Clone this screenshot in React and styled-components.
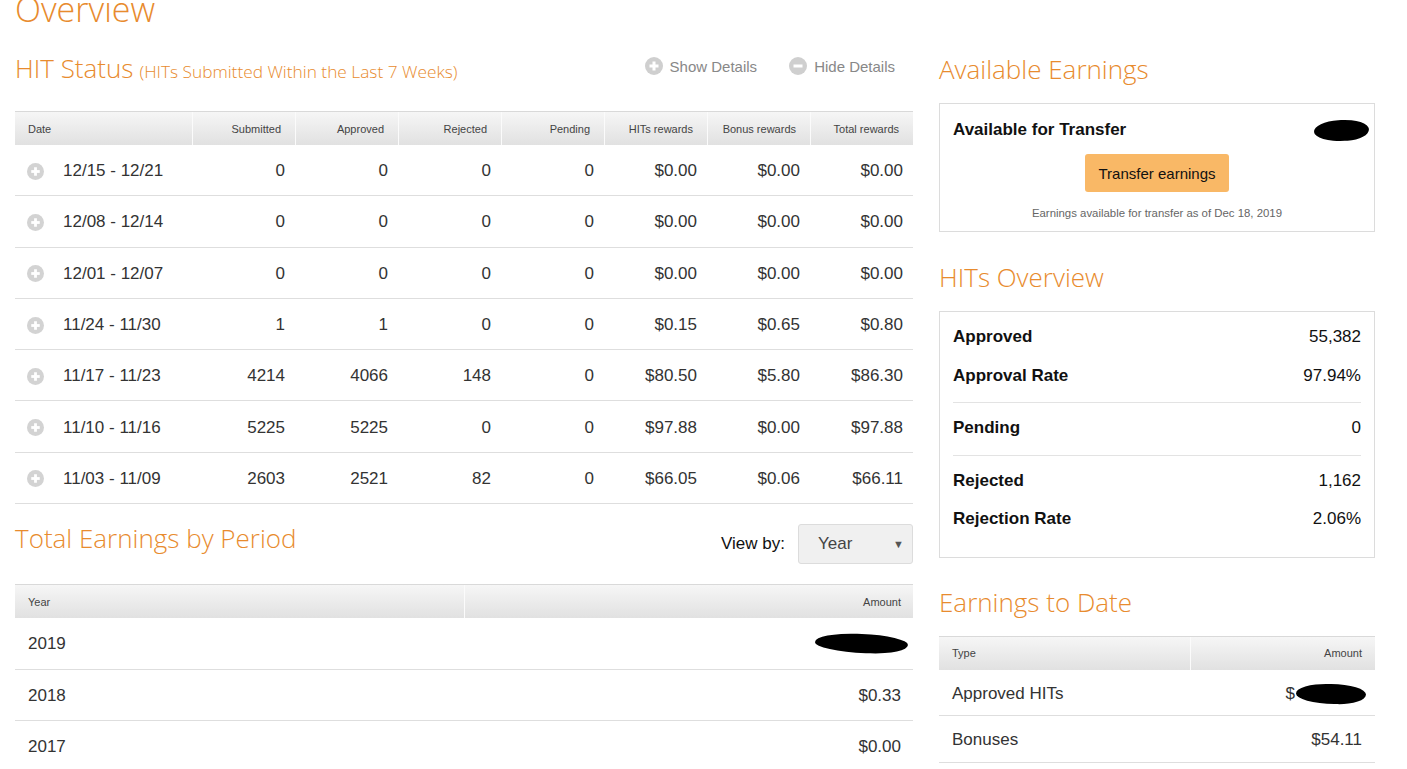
import React from 'react';
import styled, {createGlobalStyle} from 'styled-components';

const GlobalStyle = createGlobalStyle`
    html, body {
        margin: 0;
        padding: 0;
        background: #fff;
        overflow: hidden;
    }
    body {
        font-family: "Liberation Sans", Arial, sans-serif;
        color: #333;
    }
`;

const ORANGE = '#e88b2e';

const Page = styled.div`
    padding: 0 15px;
`;

const PageTitle = styled.h1`
    margin: -11px 0 0;
    font-family: "Open Sans", sans-serif;
    font-weight: 300;
    font-size: 34px;
    line-height: 40px;
    color: ${ORANGE};
`;

const Columns = styled.div`
    display: grid;
    grid-template-columns: 898px 436px;
    column-gap: 26px;
    margin-top: 21px;
`;

const Column = styled.div`
    display: flex;
    flex-direction: column;
`;

const SectionHead = styled.div`
    display: flex;
    align-items: center;
    justify-content: space-between;
    height: 40px;
    margin-top: ${p => p.$top || 0}px;
`;

const Heading = styled.h2`
    margin: 0 0 ${p => p.$lift || 0}px;
    font-family: "Open Sans", sans-serif;
    font-weight: 300;
    font-size: 26px;
    line-height: 40px;
    color: ${ORANGE};
    white-space: nowrap;
`;

const HeadingNote = styled.span`
    font-size: 17.3px;
    margin-left: 6px;
`;

const DetailLinks = styled.div`
    display: flex;
    gap: 32px;
    padding-right: 18px;
    margin-top: -8px;
`;

const DetailLink = styled.a`
    display: flex;
    align-items: center;
    gap: 7px;
    font-size: 15px;
    color: #888;
    text-decoration: none;
    cursor: pointer;
`;

const CircleIcon = ({size = 18, minus = false, color = '#cfcfcf', stroke = 3}) => (
    <svg width={size} height={size} viewBox="0 0 18 18">
        <circle cx="9" cy="9" r="9" fill={color}/>
        <line x1="4.5" y1="9" x2="13.5" y2="9" stroke="#fff" strokeWidth={stroke}/>
        {!minus && <line x1="9" y1="4.5" x2="9" y2="13.5" stroke="#fff" strokeWidth={stroke}/>}
    </svg>
);

/* tables */

const Table = styled.div`
    display: flex;
    flex-direction: column;
    margin-top: ${p => p.$top || 0}px;
`;

const HeadRow = styled.div`
    display: grid;
    grid-template-columns: ${p => p.$cols};
    height: 34px;
    box-sizing: border-box;
    border-top: 1px solid #d9d9d9;
    background: linear-gradient(#f6f6f6, #e1e1e1);
`;

const HeadCell = styled.div`
    display: flex;
    align-items: center;
    justify-content: ${p => p.$right ? 'flex-end' : 'flex-start'};
    padding: 0 ${p => p.$pad || 13}px;
    font-size: 11px;
    color: #444;
    & + & {
        border-left: 1px solid #fbfbfb;
    }
`;

const Row = styled.div`
    display: grid;
    grid-template-columns: ${p => p.$cols};
    height: ${p => p.$h || 51.3}px;
    box-sizing: border-box;
    border-bottom: 1px solid #dedede;
    padding-top: ${p => p.$nudge || 0}px;
`;

const Cell = styled.div`
    display: flex;
    align-items: center;
    justify-content: ${p => p.$right ? 'flex-end' : 'flex-start'};
    gap: 19px;
    padding: 0 ${p => p.$pad || 10}px;
    font-size: 17px;
    color: #333;
    white-space: nowrap;
`;

const Redact = styled.span`
    display: inline-block;
    width: ${p => p.$w}px;
    height: ${p => p.$h}px;
    margin-right: ${p => p.$mr || 0}px;
    background: #000;
    border-radius: 45% 50% 40% 55% / 50%;
    transform: rotate(${p => p.$rot || 0}deg);
`;

/* view by */

const ViewBy = styled.div`
    display: flex;
    align-items: center;
    gap: 13px;
    font-size: 17px;
    color: #111;
`;

const SelectBox = styled.div`
    display: flex;
    align-items: center;
    justify-content: space-between;
    width: 115px;
    height: 40px;
    box-sizing: border-box;
    padding: 0 8px 0 19px;
    background: #f0f0f0;
    border: 1px solid #dcdcdc;
    border-radius: 3px;
    font-size: 17px;
    color: #444;
    cursor: pointer;
`;

const Caret = styled.span`
    font-size: 11px;
    color: #555;
`;

/* right panels */

const Panel = styled.div`
    border: 1px solid #dcdcdc;
    margin-top: 13px;
    padding: ${p => p.$pad};
`;

const TransferTop = styled.div`
    display: flex;
    align-items: center;
    justify-content: space-between;
    height: 22px;
`;

const Strong = styled.span`
    font-weight: bold;
    font-size: 17px;
    color: #111;
`;

const TransferButton = styled.button`
    display: block;
    margin: 13px auto 0;
    width: 144px;
    height: 38px;
    border: none;
    border-radius: 3px;
    background: #f9b866;
    font-family: "Liberation Sans", Arial, sans-serif;
    font-size: 15px;
    color: #111;
    cursor: pointer;
`;

const Caption = styled.div`
    margin-top: 14px;
    text-align: center;
    font-size: 11.4px;
    line-height: 14px;
    color: #666;
`;

const StatGroup = styled.div`
    padding: 6px 0 7px;
    & + & {
        border-top: 1px solid #e3e3e3;
    }
`;

const StatRow = styled.div`
    display: flex;
    align-items: center;
    justify-content: space-between;
    height: 38.5px;
    font-size: 17px;
    color: #111;
`;

const weeks = [
    ['12/15 - 12/21', '0', '0', '0', '0', '$0.00', '$0.00', '$0.00'],
    ['12/08 - 12/14', '0', '0', '0', '0', '$0.00', '$0.00', '$0.00'],
    ['12/01 - 12/07', '0', '0', '0', '0', '$0.00', '$0.00', '$0.00'],
    ['11/24 - 11/30', '1', '1', '0', '0', '$0.15', '$0.65', '$0.80'],
    ['11/17 - 11/23', '4214', '4066', '148', '0', '$80.50', '$5.80', '$86.30'],
    ['11/10 - 11/16', '5225', '5225', '0', '0', '$97.88', '$0.00', '$97.88'],
    ['11/03 - 11/09', '2603', '2521', '82', '0', '$66.05', '$0.06', '$66.11'],
];

const statusHeads = ['Submitted', 'Approved', 'Rejected', 'Pending', 'HITs rewards', 'Bonus rewards', 'Total rewards'];
const STATUS_COLS = '177px repeat(7, 1fr)';
const YEAR_COLS = '449px 1fr';
const TYPE_COLS = '251px 1fr';

const stats = [
    [['Approved', '55,382'], ['Approval Rate', '97.94%']],
    [['Pending', '0']],
    [['Rejected', '1,162'], ['Rejection Rate', '2.06%']],
];

export default function App() {
    return (
        <Page>
            <GlobalStyle/>
            <PageTitle>Overview</PageTitle>
            <Columns>
                <Column>
                    <SectionHead>
                        <Heading>HIT Status<HeadingNote>(HITs Submitted Within the Last 7 Weeks)</HeadingNote></Heading>
                        <DetailLinks>
                            <DetailLink><CircleIcon/>Show Details</DetailLink>
                            <DetailLink><CircleIcon minus/>Hide Details</DetailLink>
                        </DetailLinks>
                    </SectionHead>

                    <Table $top={21}>
                        <HeadRow $cols={STATUS_COLS}>
                            <HeadCell>Date</HeadCell>
                            {statusHeads.map(h => <HeadCell key={h} $right $pad={14}>{h}</HeadCell>)}
                        </HeadRow>
                        {weeks.map(w => (
                            <Row key={w[0]} $cols={STATUS_COLS} $nudge={2}>
                                <Cell $pad={12}><CircleIcon size={17} color="#d3d3d3" stroke={3}/>{w[0]}</Cell>
                                {w.slice(1).map((v, i) => <Cell key={i} $right>{v}</Cell>)}
                            </Row>
                        ))}
                    </Table>

                    <SectionHead $top={20}>
                        <Heading $lift={12}>Total Earnings by Period</Heading>
                        <ViewBy>
                            View by:
                            <SelectBox>Year<Caret>▼</Caret></SelectBox>
                        </ViewBy>
                    </SectionHead>

                    <Table $top={20}>
                        <HeadRow $cols={YEAR_COLS}>
                            <HeadCell>Year</HeadCell>
                            <HeadCell $right $pad={12}>Amount</HeadCell>
                        </HeadRow>
                        <Row $cols={YEAR_COLS} $h={52}>
                            <Cell $pad={13}>2019</Cell>
                            <Cell $right $pad={12}><Redact $w={93} $h={19} $mr={-7} $rot={2}/></Cell>
                        </Row>
                        <Row $cols={YEAR_COLS} $nudge={1}>
                            <Cell $pad={13}>2018</Cell>
                            <Cell $right $pad={12}>$0.33</Cell>
                        </Row>
                        <Row $cols={YEAR_COLS} $nudge={1}>
                            <Cell $pad={13}>2017</Cell>
                            <Cell $right $pad={12}>$0.00</Cell>
                        </Row>
                    </Table>
                </Column>

                <Column>
                    <SectionHead>
                        <Heading $lift={3}>Available Earnings</Heading>
                    </SectionHead>
                    <Panel $pad="15px 13px 11px">
                        <TransferTop>
                            <Strong>Available for Transfer</Strong>
                            <Redact $w={55} $h={21} $mr={-8} $rot={-3}/>
                        </TransferTop>
                        <TransferButton>Transfer earnings</TransferButton>
                        <Caption>Earnings available for transfer as of Dec 18, 2019</Caption>
                    </Panel>

                    <SectionHead $top={26}>
                        <Heading $lift={3}>HITs Overview</Heading>
                    </SectionHead>
                    <Panel $pad="0 13px 11px">
                        {stats.map((group, gi) => (
                            <StatGroup key={gi}>
                                {group.map(([label, value]) => (
                                    <StatRow key={label}>
                                        <Strong>{label}</Strong>
                                        <span>{value}</span>
                                    </StatRow>
                                ))}
                            </StatGroup>
                        ))}
                    </Panel>

                    <SectionHead $top={25}>
                        <Heading $lift={2}>Earnings to Date</Heading>
                    </SectionHead>
                    <Table $top={13}>
                        <HeadRow $cols={TYPE_COLS}>
                            <HeadCell>Type</HeadCell>
                            <HeadCell $right $pad={13}>Amount</HeadCell>
                        </HeadRow>
                        <Row $cols={TYPE_COLS} $h={46.5} $nudge={3}>
                            <Cell $pad={13}>Approved HITs</Cell>
                            <Cell $right $pad={13} style={{gap: 1}}>$<Redact $w={70} $h={20} $mr={-4} $rot={1}/></Cell>
                        </Row>
                        <Row $cols={TYPE_COLS} $h={46.5} $nudge={3}>
                            <Cell $pad={13}>Bonuses</Cell>
                            <Cell $right $pad={13}>$54.11</Cell>
                        </Row>
                    </Table>
                </Column>
            </Columns>
        </Page>
    );
}
